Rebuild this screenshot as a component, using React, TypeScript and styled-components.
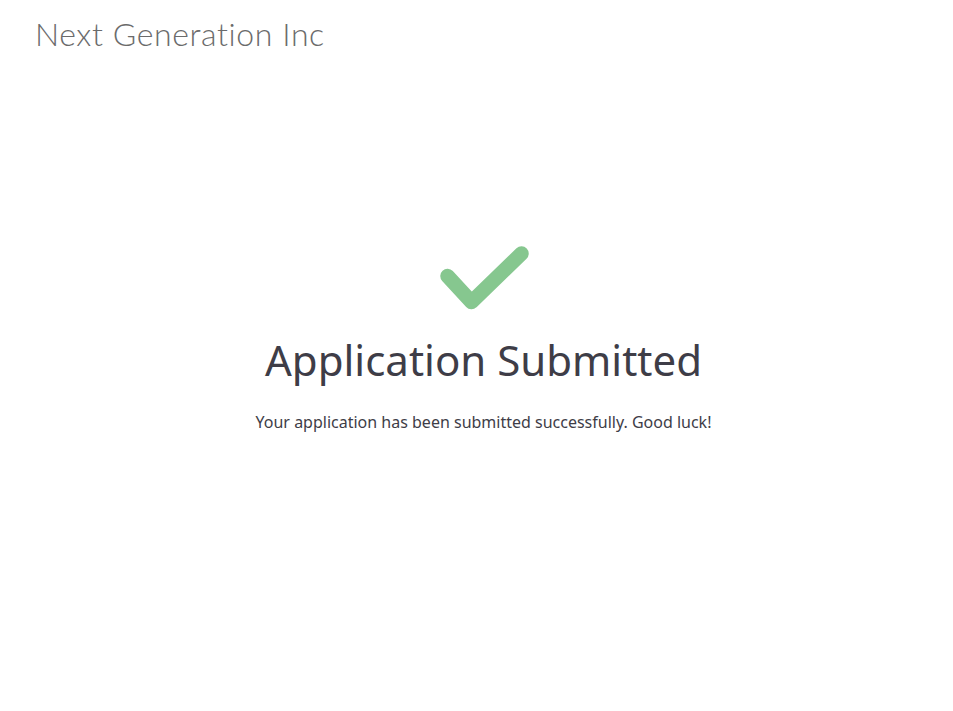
import React from "react";
import styled, { createGlobalStyle } from "styled-components";

const Global = createGlobalStyle`
  html, body { margin: 0; padding: 0; background: #ffffff; }
  body { font-family: "Open Sans", "Noto Sans", sans-serif; }
`;

const Page = styled.div`
  min-height: 711px;
  display: flex;
  flex-direction: column;
`;

const Header = styled.header`
  padding: 14px 35px 0;
`;

const Brand = styled.div`
  font-family: "Lato", "Noto Sans", sans-serif;
  font-weight: 300;
  font-size: 32px;
  letter-spacing: 0.6px;
  font-variant-ligatures: none;
  color: #6b6b6b;
  line-height: 40px;
`;

const Main = styled.main`
  display: flex;
  flex-direction: column;
  align-items: center;
  padding: 192px 0 0 14px;
`;

const Check = styled.svg`
  width: 100px;
  height: 78px;
  display: block;
`;

const Title = styled.h1`
  margin: 9px 0 0;
  font-family: "Noto Sans", "Open Sans", sans-serif;
  font-weight: 400;
  font-size: 42px;
  line-height: 54px;
  color: #3e3d47;
`;

const Message = styled.p`
  margin: 24px 0 0;
  font-family: "Noto Sans", "Open Sans", sans-serif;
  font-size: 16px;
  line-height: 22px;
  color: #3e3d47;
`;

export default function App() {
  return (
    <Page>
      <Global />
      <Header>
        <Brand>Next Generation Inc</Brand>
      </Header>
      <Main>
        <Check viewBox="0 0 100 78">
          <path
            d="M13.5 30 L37.5 56 L87.5 7.5"
            fill="none"
            stroke="#86c78f"
            strokeWidth="14.5"
            strokeLinecap="round"
            strokeLinejoin="round"
          />
        </Check>
        <Title>Application Submitted</Title>
        <Message>Your application has been submitted successfully. Good luck!</Message>
      </Main>
    </Page>
  );
}
